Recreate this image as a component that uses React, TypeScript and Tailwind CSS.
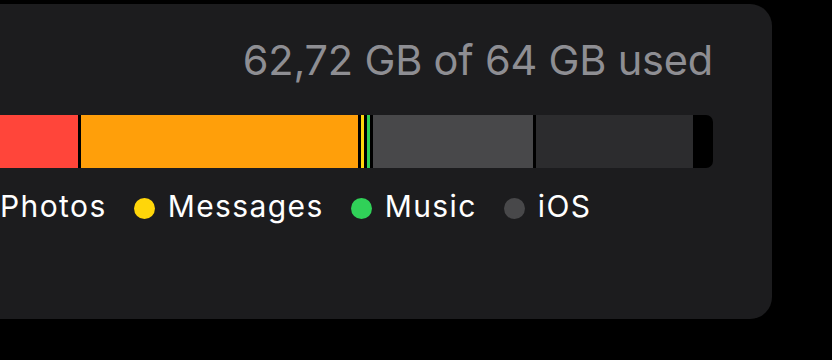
const segments = [
  { label: 'Photos', color: 'bg-[#ff453a]', width: 'w-[111px]' },
  { label: 'Messages', color: 'bg-[#ff9f0a]', width: 'w-[277px]' },
  { label: 'Mail', color: 'bg-[#ffd60a]', width: 'w-[3px]' },
  { label: 'Music', color: 'bg-[#30d158]', width: 'w-[3px]' },
  { label: 'iOS', color: 'bg-[#48484a]', width: 'w-[160px]' },
  { label: 'System Data', color: 'bg-[#2c2c2e]', width: 'w-[157px]' },
];

const legend = [
  { label: 'Photos', dot: 'bg-[#ff453a]' },
  { label: 'Messages', dot: 'bg-[#ffd60a]' },
  { label: 'Music', dot: 'bg-[#30d158]' },
  { label: 'iOS', dot: 'bg-[#48484a]' },
];

export default function App() {
  return (
    <div className="w-[832px] h-[360px] bg-black overflow-hidden pt-[4px] font-['Inter',sans-serif]">
      <div className="ml-[-92px] w-[864px] h-[315px] rounded-[22px] bg-[#1c1c1e] pt-[36px] px-[59px]">
        <div className="text-right text-[41.5px] leading-none text-[#8e8e93] tracking-[-0.2px]">
          62,72 GB of 64 GB used
        </div>

        <div className="mt-[33px] h-[53px] flex gap-[3px] bg-black rounded-[7px] overflow-hidden">
          {segments.map(s => (
            <div key={s.label} className={`${s.width} ${s.color} shrink-0`} />
          ))}
        </div>

        <div className="mt-[23px] -ml-[1px] flex items-center gap-[27px] text-[30px] leading-none tracking-[1.4px] text-white">
          {legend.map(l => (
            <div key={l.label} className="flex items-center gap-[13px]">
              <span className={`w-[21px] h-[21px] mt-[5px] rounded-full ${l.dot}`} />
              <span>{l.label}</span>
            </div>
          ))}
        </div>
      </div>
    </div>
  );
}
